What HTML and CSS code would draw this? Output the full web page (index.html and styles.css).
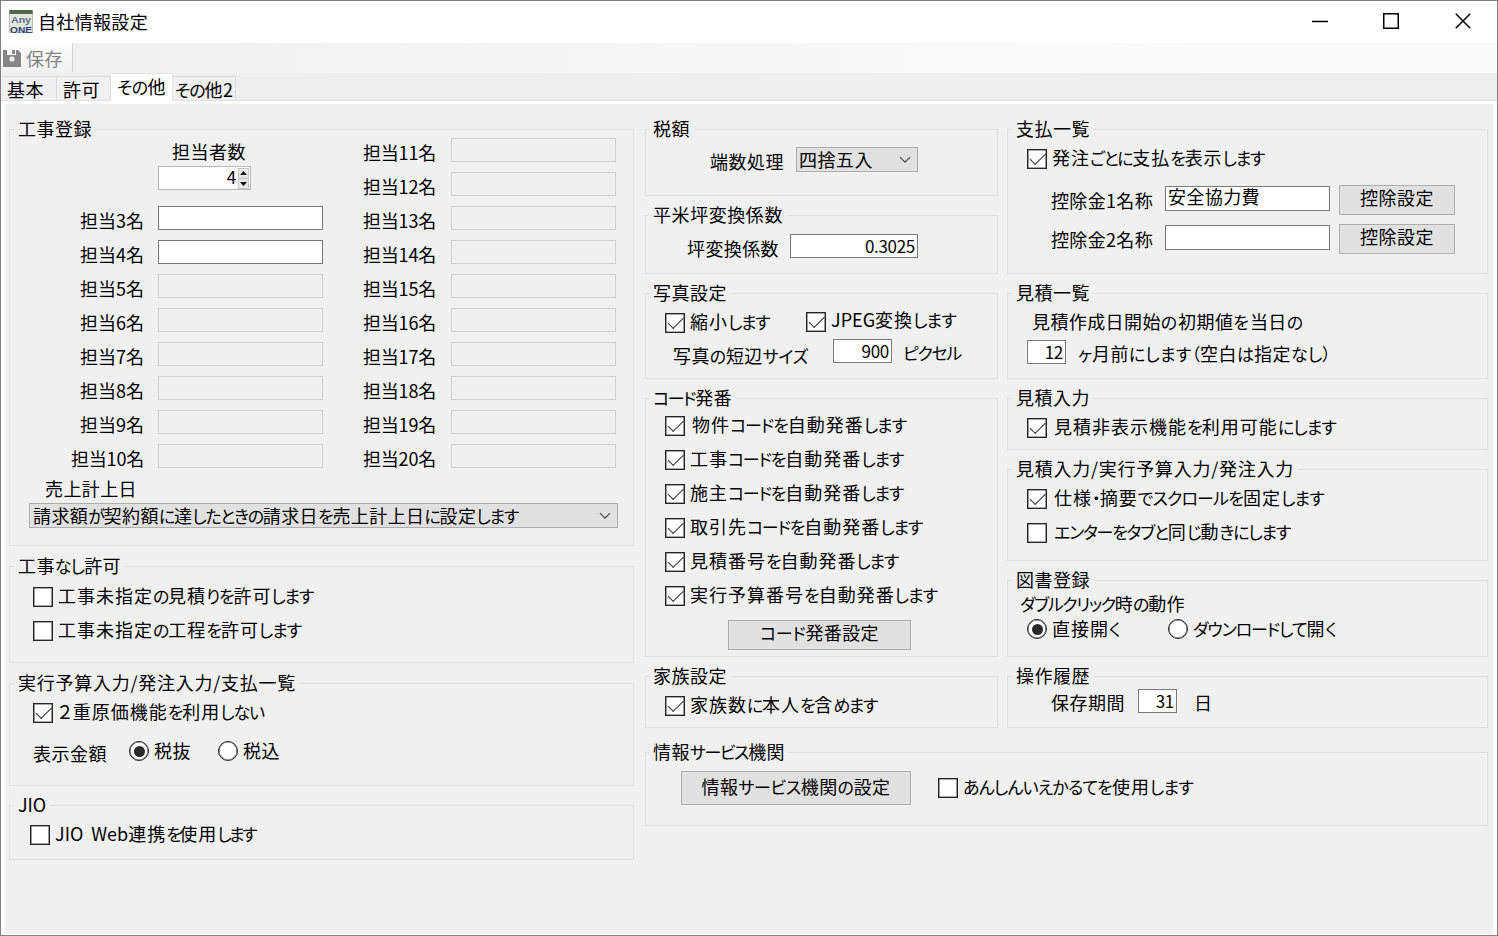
FILE: index.html
```html
<!DOCTYPE html>
<html lang="ja">
<head>
<meta charset="utf-8">
<title>自社情報設定</title>
<link rel="stylesheet" href="styles.css">
</head>
<body>
<div class="window">
  <header class="titlebar">
    <svg class="app-icon" width="24" height="25" viewBox="0 0 24 25">
      <rect x="0.5" y="1.5" width="23" height="22" fill="#e4e7e0" stroke="#b9bdb6"/>
      <rect x="0.5" y="1" width="23" height="4" fill="#4f6a45"/>
      <text x="12" y="14" text-anchor="middle" class="logo-any" textLength="20" lengthAdjust="spacingAndGlyphs">Any</text>
      <text x="12" y="24" text-anchor="middle" class="logo-one" textLength="22" lengthAdjust="spacingAndGlyphs">ONE</text>
    </svg>
    <h1 class="title"><span data-w="110">自社情報設定</span></h1>
    <svg class="win-btn" width="16" height="16" viewBox="0 0 16 16"><path d="M0 8.5H16" /></svg>
    <svg class="win-btn" width="16" height="16" viewBox="0 0 16 16"><rect x="0.75" y="0.75" width="14.5" height="14.5"/></svg>
    <svg class="win-btn" width="16" height="16" viewBox="0 0 16 16"><path d="M0.8 0.8L15.2 15.2M15.2 0.8L0.8 15.2"/></svg>
  </header>
  <div class="toolbar">
    <button class="save">
      <svg width="18" height="17" viewBox="0 0 18 17"><path d="M0 0H4V5H13V0H15L18 3V17H0Z" fill="#868686"/><rect x="9" y="0" width="3" height="4" fill="#868686"/><circle cx="9" cy="9" r="2.6" fill="#eee"/></svg>
      <span data-w="37">保存</span>
    </button>
  </div>
  <nav class="tabs">
    <span class="tab tab-basic"><span data-w="37">基本</span></span>
    <span class="tab tab-permit"><span data-w="37">許可</span></span>
    <span class="tab tab-other active"><span data-w="49">その他</span></span>
    <span class="tab tab-other2"><span data-w="58">その他2</span></span>
  </nav>
  <main class="panel">
    <div class="col-left">
      <section class="group g-work">
        <h2><span data-w="74">工事登録</span></h2>
        <div class="staff">
          <div class="staff-a">
            <div class="count-label"><span data-w="74">担当者数</span></div>
            <div class="spin"><span class="num">4</span>
              <svg width="11" height="21" viewBox="0 0 11 21"><rect x="0.5" y="0.5" width="10" height="9.5" fill="#e9e9e9" stroke="#c4c4c4"/><rect x="0.5" y="11" width="10" height="9.5" fill="#e9e9e9" stroke="#c4c4c4"/><path d="M2 7L5.5 3L9 7ZM2 14L5.5 18L9 14Z" fill="#111"/></svg>
            </div>
            <div class="rows">
              <label><span data-w="64">担当3名</span><input></label>
              <label><span data-w="64">担当4名</span><input></label>
              <label><span data-w="64">担当5名</span><input disabled></label>
              <label><span data-w="64">担当6名</span><input disabled></label>
              <label><span data-w="64">担当7名</span><input disabled></label>
              <label><span data-w="64">担当8名</span><input disabled></label>
              <label><span data-w="64">担当9名</span><input disabled></label>
              <label><span data-w="73">担当10名</span><input disabled></label>
            </div>
          </div>
          <div class="staff-b rows">
            <label><span data-w="73">担当11名</span><input disabled></label>
            <label><span data-w="73">担当12名</span><input disabled></label>
            <label><span data-w="73">担当13名</span><input disabled></label>
            <label><span data-w="73">担当14名</span><input disabled></label>
            <label><span data-w="73">担当15名</span><input disabled></label>
            <label><span data-w="73">担当16名</span><input disabled></label>
            <label><span data-w="73">担当17名</span><input disabled></label>
            <label><span data-w="73">担当18名</span><input disabled></label>
            <label><span data-w="73">担当19名</span><input disabled></label>
            <label><span data-w="73">担当20名</span><input disabled></label>
          </div>
        </div>
        <div class="sales-label"><span data-w="92">売上計上日</span></div>
        <div class="combo sales"><span data-w="485">請求額が契約額に達したときの請求日を売上計上日に設定します</span><svg width="12" height="8" viewBox="0 0 12 8"><path d="M1 1.2L6 6.2L11 1.2"/></svg></div>
      </section>

      <section class="group g-nowork">
        <h2><span data-w="103">工事なし許可</span></h2>
        <div class="check"><i class="box"></i><span data-w="255">工事未指定の見積りを許可します</span></div>
        <div class="check"><i class="box"></i><span data-w="243">工事未指定の工程を許可します</span></div>
      </section>

      <section class="group g-budget">
        <h2><span data-w="278">実行予算入力/発注入力/支払一覧</span></h2>
        <div class="check"><i class="box on"></i><span data-w="206">２重原価機能を利用しない</span></div>
        <div class="line amounts">
          <span class="cap"><span data-w="74">表示金額</span></span>
          <div class="check"><i class="radio on"></i><span data-w="37">税抜</span></div>
          <div class="check second"><i class="radio"></i><span data-w="37">税込</span></div>
        </div>
      </section>

      <section class="group g-jio">
        <h2><span data-w="28">JIO</span></h2>
        <div class="check"><i class="box"></i><span data-w="200">JIO Web連携を使用します</span></div>
      </section>
    </div>

    <div class="col-right">
      <div class="upper">
        <div class="col-mid">
          <section class="group g-tax">
            <h2><span data-w="37">税額</span></h2>
            <div class="line"><span class="cap"><span data-w="74">端数処理</span></span><div class="combo"><span data-w="74">四捨五入</span><svg width="12" height="8" viewBox="0 0 12 8"><path d="M1 1.2L6 6.2L11 1.2"/></svg></div></div>
          </section>
          <section class="group g-tsubo">
            <h2><span data-w="130">平米坪変換係数</span></h2>
            <div class="line"><span class="cap"><span data-w="92">坪変換係数</span></span><input class="num" value="0.3025"></div>
          </section>
          <section class="group g-photo">
            <h2><span data-w="74">写真設定</span></h2>
            <div class="line opts"><div class="check shrink"><i class="box on"></i><span data-w="79">縮小します</span></div><div class="check jpeg"><i class="box on"></i><span data-w="125">JPEG変換します</span></div></div>
            <div class="line size"><span class="cap"><span data-w="135">写真の短辺サイズ</span></span><input class="num" value="900"><span class="unit"><span data-w="58">ピクセル</span></span></div>
          </section>
          <section class="group g-code">
            <h2><span data-w="79">コード発番</span></h2>
            <div class="check wide"><i class="box on"></i><span data-w="214">物件コードを自動発番します</span></div>
            <div class="check"><i class="box on"></i><span data-w="213">工事コードを自動発番します</span></div>
            <div class="check"><i class="box on"></i><span data-w="213">施主コードを自動発番します</span></div>
            <div class="check"><i class="box on"></i><span data-w="232">取引先コードを自動発番します</span></div>
            <div class="check"><i class="box on"></i><span data-w="208">見積番号を自動発番します</span></div>
            <div class="check"><i class="box on"></i><span data-w="247">実行予算番号を自動発番します</span></div>
            <button class="btn"><span data-w="119">コード発番設定</span></button>
          </section>
          <section class="group g-family">
            <h2><span data-w="74">家族設定</span></h2>
            <div class="check"><i class="box on"></i><span data-w="187">家族数に本人を含めます</span></div>
          </section>
        </div>

        <div class="col-end">
          <section class="group g-pay">
            <h2><span data-w="74">支払一覧</span></h2>
            <div class="check"><i class="box on"></i><span data-w="212">発注ごとに支払を表示します</span></div>
            <div class="line"><span class="cap"><span data-w="102">控除金1名称</span></span><div class="field"><span data-w="92">安全協力費</span></div><button class="btn"><span data-w="74">控除設定</span></button></div>
            <div class="line"><span class="cap"><span data-w="102">控除金2名称</span></span><div class="field"></div><button class="btn"><span data-w="74">控除設定</span></button></div>
          </section>
          <section class="group g-list">
            <h2><span data-w="74">見積一覧</span></h2>
            <p><span data-w="272">見積作成日開始の初期値を当日の</span></p>
            <div class="line"><input class="num" value="12"><span class="unit"><span data-w="253">ヶ月前にします（空白は指定なし）</span></span></div>
          </section>
          <section class="group g-entry">
            <h2><span data-w="74">見積入力</span></h2>
            <div class="check wide"><i class="box on"></i><span data-w="282">見積非表示機能を利用可能にします</span></div>
          </section>
          <section class="group g-entry3">
            <h2><span data-w="278">見積入力/実行予算入力/発注入力</span></h2>
            <div class="check wide"><i class="box on"></i><span data-w="270">仕様・摘要でスクロールを固定します</span></div>
            <div class="check wide"><i class="box"></i><span data-w="236">エンターをタブと同じ動きにします</span></div>
          </section>
          <section class="group g-book">
            <h2><span data-w="74">図書登録</span></h2>
            <p><span data-w="165">ダブルクリック時の動作</span></p>
            <div class="line"><div class="check direct"><i class="radio on"></i><span data-w="65">直接開く</span></div><div class="check"><i class="radio"></i><span data-w="143">ダウンロードして開く</span></div></div>
          </section>
          <section class="group g-history">
            <h2><span data-w="74">操作履歴</span></h2>
            <div class="line"><span class="cap"><span data-w="74">保存期間</span></span><input class="num" value="31"><span class="unit">日</span></div>
          </section>
        </div>
      </div>

      <section class="group g-service">
        <h2><span data-w="132">情報サービス機関</span></h2>
        <div class="line"><button class="btn"><span data-w="189">情報サービス機関の設定</span></button><div class="check"><i class="box"></i><span data-w="230">あんしんいえかるてを使用します</span></div></div>
      </section>
    </div>
  </main>
</div>
<script src="labels.js"></script>
</body>
</html>
```

FILE: styles.css
```css
* { box-sizing: border-box; }
body {
  margin: 0;
  font: 18px/20px "Noto Sans CJK JP", sans-serif;
  font-feature-settings: "palt";
  color: #000;
}
h1, h2, p { margin: 0; font: inherit; }
button, input { font: inherit; color: inherit; margin: 0; border-radius: 0; }
svg { display: block; flex: none; }
[data-w] { white-space: nowrap; }
.kana { font-size: 17px; }

.window {
  width: 1498px;
  height: 936px;
  border: 1px solid #808080;
  background: #fff;
  display: flex;
  flex-direction: column;
  overflow: hidden;
}

/* Title bar */
.titlebar { height: 42px; display: flex; align-items: flex-start; padding: 8px 26px 0 8px; }
.title { margin: 2px auto 0 5px; }
.win-btn { margin: 4px 0 0 56px; fill: none; stroke: #000; stroke-width: 1.5; }
.title + .win-btn { margin: 4px -1px 0 0; }
.logo-any { font: bold 9px "Liberation Sans", sans-serif; fill: #5d6c82; }
.logo-one { font: bold 9.5px "Liberation Sans", sans-serif; fill: #243f78; }

/* Toolbar */
.toolbar { height: 30px; background: linear-gradient(90deg, #f0f0f0, #fbfbfb 80%); }
.save {
  display: flex;
  align-items: flex-start;
  gap: 5px;
  width: 72px;
  height: 29px;
  padding: 7px 0 0 2px;
  border: 0;
  border-right: 1px solid #d4d4d4;
  background: linear-gradient(#fdfdfd, #f1f1f1);
  color: #838383;
}
.save span { margin-top: -2px; }

/* Tabs */
.tabs {
  display: flex;
  align-items: flex-end;
  height: 28px;
  padding-left: 1px;
  background: #eee;
  border-bottom: 1px solid #e0e0e0;
}
.tab { height: 24px; border: 1px solid #dcdcdc; border-width: 1px 1px 0 0; background: #f0f0f0; padding-top: 2px; }
.tab-basic { width: 55px; padding-left: 5px; }
.tab-permit { width: 54px; padding-left: 6px; }
.tab-other { width: 62px; padding-left: 6px; }
.tab-other2 { width: 63px; padding-left: 2px; }
.tab.active { height: 28px; margin-bottom: -1px; background: #fff; border-color: #e4e4e4; padding-top: 2px; }

/* Panel and columns */
.panel {
  flex: 1;
  display: flex;
  gap: 11px;
  margin: 3px 4px 1px;
  padding: 25px 5px 0 4px;
  background: #f0f0f0;
}
.col-left { width: 625px; }
.col-right { width: 843px; }
.upper { display: flex; gap: 9px; }
.col-mid { width: 353px; }
.col-end { width: 481px; }

/* Titled group */
.group { border: 1px solid #dfdfdf; }
.group h2 {
  width: fit-content;
  height: 20px;
  margin: -12px 0 0 4px;
  padding: 0 3px 0 4px;
  background: #f0f0f0;
}
.col-mid h2, .g-service h2 { padding: 0 4px 0 3px; }
.line { display: flex; align-items: center; }
.cap { padding-top: 3px; }

/* Controls */
input, .field {
  flex: none;
  height: 24px;
  padding: 0 2px;
  border: 1px solid #7a7a7a;
  background: #fff;
}
input:disabled { background: #f0f0f0; border-color: #cfcfcf; }
.num { font-size: 17px; letter-spacing: -0.3px; text-align: right; padding-bottom: 2px; }
.btn {
  flex: none;
  border: 1px solid #adadad;
  background: #e1e1e1;
  padding: 0 0 4px;
  text-align: center;
}
.combo {
  display: flex;
  align-items: center;
  justify-content: space-between;
  height: 25px;
  padding: 0 6px 0 3px;
  border: 1px solid #adadad;
  background: #e1e1e1;
}
.combo span { padding-bottom: 1px; }
.combo svg { fill: none; stroke: #444; stroke-width: 1.2; }
.check { display: flex; align-items: center; height: 20px; gap: 5px; }
.check.wide { gap: 7px; }
.check > span { padding-bottom: 4px; }
.box, .radio {
  position: relative;
  flex: none;
  width: 20px;
  height: 20px;
  border: 1px solid #262626;
  background: #fff;
  box-shadow: inset 0 0 0 0.6px #555;
}
.radio { border-radius: 50%; }
.box.on::after {
  content: "";
  position: absolute;
  left: 2px;
  top: 3px;
  width: 14px;
  height: 6.5px;
  border: solid #333;
  border-width: 0 0 1.4px 1.4px;
  transform: rotate(-45deg);
}
.radio.on::after {
  content: "";
  position: absolute;
  inset: 3.5px;
  border-radius: 50%;
  background: #2a2a2a;
}

/* Construction registration */
.g-work { height: 417px; }
.staff { display: flex; }
.count-label { margin: 3px 0 5px 162px; height: 20px; }
.spin {
  display: flex;
  justify-content: flex-end;
  width: 93px;
  height: 24px;
  margin: 0 0 16px 148px;
  padding: 1px 1px 0 0;
  border: 1px solid #b8b8b8;
  background: #fff;
}
.spin .num { margin: -1px 2px 0 0; }
.rows { display: flex; flex-direction: column; gap: 10px; }
.rows label { display: flex; justify-content: flex-end; align-items: center; height: 24px; }
.rows label span { margin-top: 3px; }
.rows input { width: 165px; margin-left: 14px; }
.staff-a { width: 313px; }
.staff-b { width: 293px; }
.staff-b input { margin-left: 15px; }
.sales-label { margin: 10px 0 5px 35px; height: 20px; }
.sales { width: 589px; margin-left: 19px; }

.g-nowork { height: 97px; margin-top: 20px; }
.g-nowork .check { margin: 12px 0 14px 23px; }
.g-budget { height: 103px; margin-top: 20px; }
.g-budget > .check { margin: 11px 0 0 23px; }
.amounts { height: 20px; margin: 18px 0 0 23px; }
.amounts .cap { margin-right: 22px; }
.amounts .check > span { padding-bottom: 2px; }
.amounts .second { margin-left: 27px; }
.g-jio { height: 55px; margin-top: 19px; }
.g-jio .check { margin: 11px 0 0 20px; word-spacing: 4px; }

/* Middle column */
.g-tax { height: 67px; }
.g-tax .line { margin: 9px 0 0 64px; }
.g-tax .combo { width: 122px; margin-left: 12px; padding-left: 2px; }
.g-tsubo { height: 59px; margin-top: 19px; }
.g-tsubo .line { margin: 10px 0 0 41px; }
.g-tsubo input { width: 128px; margin-left: 11px; }
.g-photo { height: 86px; margin-top: 19px; }
.opts { margin: 10px 0 0 19px; height: 20px; }
.shrink { width: 141px; margin-top: 2px; }
.jpeg { margin-top: -1px; }
.size { margin: 7px 0 0 27px; height: 24px; }
.size .cap { padding-top: 8px; }
.size input { width: 59px; margin: 0 11px 0 25px; }
.unit { padding-top: 2px; }
.g-code { height: 259px; margin-top: 19px; }
.g-code .check { margin: 0 0 14px 19px; }
.g-code h2 + .check { margin-top: 9px; }
.g-code .btn { display: block; width: 183px; height: 30px; margin: 0 0 0 82px; padding-bottom: 5px; }
.g-family { height: 52px; margin-top: 19px; }
.g-family .check { margin: 11px 0 0 19px; }

/* Right column */
.g-pay { height: 145px; }
.g-pay .check { margin: 11px 0 16px 19px; }
.g-pay .line { height: 30px; margin: 0 0 9px 43px; }
.g-pay .field { width: 165px; height: 25px; margin: 0 9px 4px 12px; line-height: 19px; }
.g-pay .btn { width: 116px; height: 30px; padding-bottom: 6px; }
.g-pay .cap { padding-bottom: 1px; padding-top: 0; }
.g-list { height: 86px; margin-top: 19px; }
.g-list p { margin: 9px 0 8px 24px; }
.g-list .line { margin-left: 19px; }
.g-list input { width: 39px; margin-right: 12px; }
.g-entry { height: 52px; margin-top: 19px; }
.g-entry .check { margin: 11px 0 0 19px; }
.g-entry3 { height: 92px; margin-top: 19px; }
.g-entry3 .check { margin: 11px 0 14px 19px; }
.g-entry3 .check + .check { margin-top: 0; }
.g-book { height: 77px; margin-top: 19px; }
.g-book p { margin: 4px 0 5px 12px; }
.g-book .line { margin-left: 19px; }
.g-book .check > span { padding-bottom: 2px; }
.direct { width: 141px; }
.g-history { height: 52px; margin-top: 19px; }
.g-history .line { margin: 4px 0 0 43px; }
.g-history input { width: 39px; margin: 0 17px 0 13px; }
.g-history .cap { padding-top: 2px; }

.g-service { height: 74px; margin-top: 24px; }
.g-service .line { margin: 10px 0 0 35px; }
.g-service .btn { width: 230px; height: 34px; margin-right: 27px; }
```

FILE: labels.js
```js
// Sets labels like a proportional gothic: wide kanji pitch, narrow kana,
// with the kana spacing adjusted so each label has its declared width.
const KANA = /([\u3041-\u30FF（）]+)/;
const KANJI = /([\u4E00-\u9FFF２]+)/;

document.querySelectorAll('[data-w]').forEach((label) => {
  const target = Number(label.dataset.w);
  const pitch = label.closest('.check') ? 1 : 0.4;
  const text = label.textContent;
  const kanaCount = [...text].filter((c) => KANA.test(c)).length;

  if (!kanaCount) {
    const width = label.getBoundingClientRect().width;
    label.style.letterSpacing = (target - width) / text.length + 'px';
    return;
  }

  label.textContent = '';
  const runs = text.split(KANA).flatMap((run) => run.split(KANJI)).filter(Boolean);
  runs.forEach((run) => {
    const part = document.createElement('span');
    part.textContent = run;
    if (KANA.test(run)) part.className = 'kana';
    else if (KANJI.test(run)) part.style.letterSpacing = pitch + 'px';
    label.append(part);
  });
  const spare = target - label.getBoundingClientRect().width;
  label.querySelectorAll('.kana').forEach((part) => {
    part.style.letterSpacing = spare / kanaCount + 'px';
  });
});
```
